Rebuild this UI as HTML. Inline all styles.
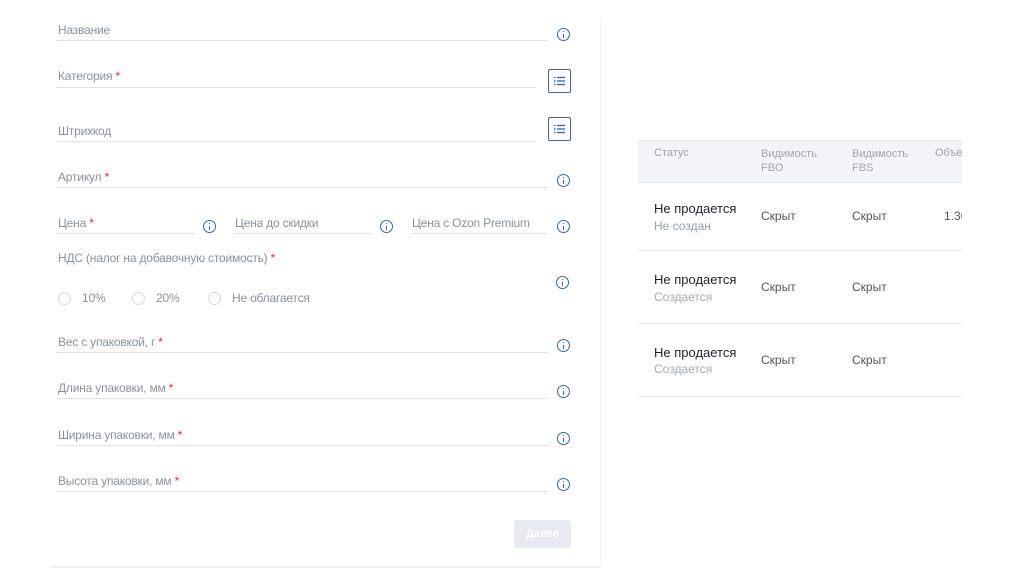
<!DOCTYPE html>
<html><head><meta charset="utf-8"><style>
body{margin:0;width:1024px;height:574px;background:#fff;position:relative;overflow:hidden;font-family:"Liberation Sans",sans-serif;}
.a{position:absolute;}
.lbl{position:absolute;font-size:12px;color:#8b919b;letter-spacing:-0.2px;white-space:nowrap;}
.ln{position:absolute;height:1px;background:#dfe2e7;}
.st{color:#e0224d;}
.ic{position:absolute;width:11px;height:11px;border:1.3px solid #2f62c6;border-radius:50%;}
.ic:before{content:"";position:absolute;left:5px;top:2px;width:1.4px;height:1.4px;background:#2f62c6;}
.ic:after{content:"";position:absolute;left:5px;top:4.5px;width:1.4px;height:4px;background:#2f62c6;}
.btn{position:absolute;width:21px;height:22px;border:1.3px solid #3b67c2;border-radius:2px;background:#fff;}
.rad{position:absolute;width:11px;height:11px;border:1px solid #d5d9df;border-radius:50%;}
.t{position:absolute;font-size:12px;white-space:nowrap;}
</style></head><body>
<div class="a" style="left:600px;top:18px;width:1px;height:548px;background:#f3f4f6"></div>
<div class="a" style="left:50px;top:566px;width:550px;height:2px;background:#eef0f3"></div>

<div class="lbl" style="left:58px;top:23px">Название</div><div class="ln" style="left:57px;top:40px;width:491px"></div><div class="ic" style="left:557px;top:28px"></div>
<div class="lbl" style="left:58px;top:69px">Категория <span class="st">*</span></div><div class="ln" style="left:57px;top:87px;width:479px"></div>
<div class="btn" style="left:548px;top:69px"><svg width="21" height="22"><g stroke="#3b67c2" stroke-width="1.4"><line x1="5" y1="7.5" x2="6.5" y2="7.5"/><line x1="8" y1="7.5" x2="16" y2="7.5"/><line x1="5" y1="11" x2="6.5" y2="11"/><line x1="8" y1="11" x2="16" y2="11"/><line x1="5" y1="14.5" x2="6.5" y2="14.5"/><line x1="8" y1="14.5" x2="16" y2="14.5"/></g></svg></div>
<div class="lbl" style="left:58px;top:124px">Штрихкод</div><div class="ln" style="left:57px;top:141px;width:479px"></div>
<div class="btn" style="left:548px;top:117px"><svg width="21" height="22"><g stroke="#3b67c2" stroke-width="1.4"><line x1="5" y1="7.5" x2="6.5" y2="7.5"/><line x1="8" y1="7.5" x2="16" y2="7.5"/><line x1="5" y1="11" x2="6.5" y2="11"/><line x1="8" y1="11" x2="16" y2="11"/><line x1="5" y1="14.5" x2="6.5" y2="14.5"/><line x1="8" y1="14.5" x2="16" y2="14.5"/></g></svg></div>
<div class="lbl" style="left:58px;top:170px">Артикул <span class="st">*</span></div><div class="ln" style="left:57px;top:187px;width:491px"></div><div class="ic" style="left:557px;top:174px"></div>
<div class="lbl" style="left:58px;top:216px">Цена <span class="st">*</span></div><div class="ln" style="left:57px;top:233px;width:138px"></div><div class="ic" style="left:203px;top:220px"></div>
<div class="lbl" style="left:235px;top:216px">Цена до скидки</div><div class="ln" style="left:234px;top:233px;width:137px"></div><div class="ic" style="left:380px;top:220px"></div>
<div class="lbl" style="left:412px;top:216px">Цена с Ozon Premium</div><div class="ln" style="left:411px;top:233px;width:137px"></div><div class="ic" style="left:557px;top:220px"></div>
<div class="lbl" style="left:58px;top:251px">НДС (налог на добавочную стоимость) <span class="st">*</span></div>
<div class="ic" style="left:556px;top:276px"></div>
<div class="rad" style="left:58px;top:292px"></div><div class="lbl" style="left:82px;top:291px">10%</div>
<div class="rad" style="left:132px;top:292px"></div><div class="lbl" style="left:156px;top:291px">20%</div>
<div class="rad" style="left:208px;top:292px"></div><div class="lbl" style="left:232px;top:291px">Не облагается</div>
<div class="lbl" style="left:58px;top:335px">Вес с упаковкой, г <span class="st">*</span></div><div class="ln" style="left:57px;top:352px;width:491px"></div><div class="ic" style="left:557px;top:339px"></div>
<div class="lbl" style="left:58px;top:381px">Длина упаковки, мм <span class="st">*</span></div><div class="ln" style="left:57px;top:398px;width:491px"></div><div class="ic" style="left:557px;top:385px"></div>
<div class="lbl" style="left:58px;top:428px">Ширина упаковки, мм <span class="st">*</span></div><div class="ln" style="left:57px;top:445px;width:491px"></div><div class="ic" style="left:557px;top:432px"></div>
<div class="lbl" style="left:58px;top:474px">Высота упаковки, мм <span class="st">*</span></div><div class="ln" style="left:57px;top:491px;width:491px"></div><div class="ic" style="left:557px;top:478px"></div>
<div class="a" style="left:514px;top:520px;width:57px;height:28px;background:#e7eaf0;border-radius:3px;color:#fff;font-size:11px;font-weight:bold;text-align:center;line-height:28px">Далее</div>

<div class="a" style="left:638px;top:140px;width:324px;height:41px;background:#f2f4f7;border-top:1px solid #e6e8ec;border-bottom:1px solid #e3e6ea;overflow:hidden">
<div class="t" style="left:16px;top:6px;font-size:11px;color:#a0a5ad">Статус</div>
<div class="t" style="left:123px;top:6px;font-size:11px;color:#a0a5ad;line-height:14px">Видимость<br>FBO</div>
<div class="t" style="left:214px;top:6px;font-size:11px;color:#a0a5ad;line-height:14px">Видимость<br>FBS</div>
<div class="t" style="left:297px;top:6px;font-size:11px;color:#a0a5ad">Объем</div>
</div>
<div class="ln" style="left:638px;top:250px;width:324px;background:#e3e6ea"></div>
<div class="ln" style="left:638px;top:323px;width:324px;background:#e3e6ea"></div>
<div class="ln" style="left:638px;top:396px;width:324px;background:#e3e6ea"></div>

<div class="t" style="left:654px;top:201px;font-size:13px;color:#1d2128">Не продается</div><div class="t" style="left:654px;top:219px;color:#9aa0a8">Не создан</div>
<div class="t" style="left:761px;top:209px;color:#50565f">Скрыт</div><div class="t" style="left:852px;top:209px;color:#50565f">Скрыт</div>
<div class="a" style="left:944px;top:209px;width:18px;overflow:hidden;font-size:12px;color:#50565f">1.36</div>
<div class="t" style="left:654px;top:272px;font-size:13px;color:#1d2128">Не продается</div><div class="t" style="left:654px;top:290px;color:#a6abb2">Создается</div>
<div class="t" style="left:761px;top:280px;color:#50565f">Скрыт</div><div class="t" style="left:852px;top:280px;color:#50565f">Скрыт</div>
<div class="t" style="left:654px;top:345px;font-size:13px;color:#1d2128">Не продается</div><div class="t" style="left:654px;top:362px;color:#a6abb2">Создается</div>
<div class="t" style="left:761px;top:353px;color:#50565f">Скрыт</div><div class="t" style="left:852px;top:353px;color:#50565f">Скрыт</div>
</body></html>
